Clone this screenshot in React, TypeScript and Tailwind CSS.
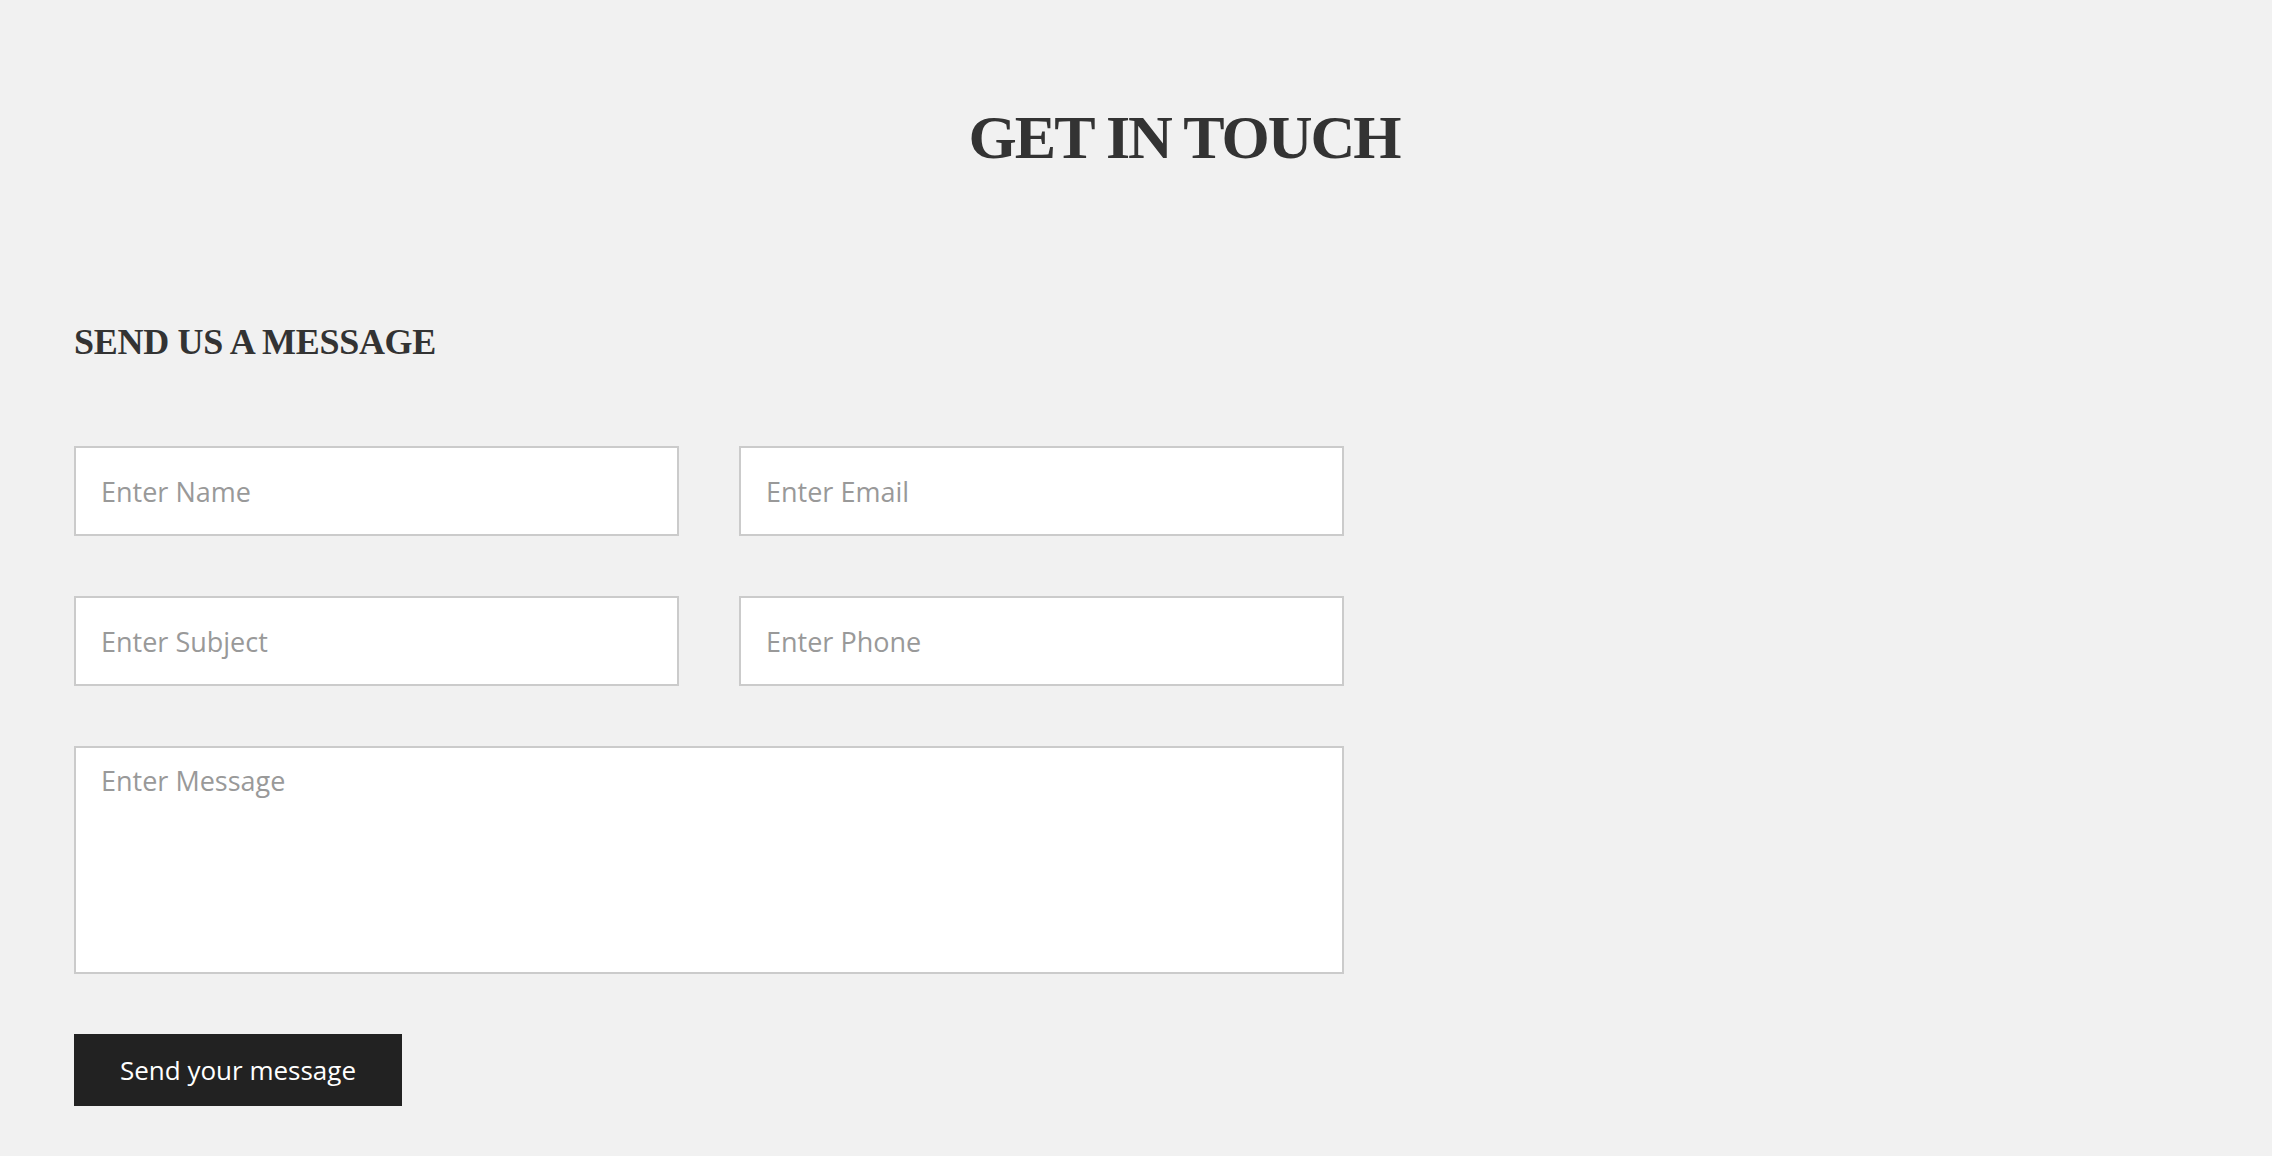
import React from "react";

const fieldClass =
  "w-full h-[90px] bg-white border-2 border-[#cbcbcb] px-[25px] font-['Open_Sans','Noto_Sans',sans-serif] text-[27px] text-[#333] placeholder:text-[#999] outline-none";

function Field({ placeholder }: { placeholder: string }) {
  return <input type="text" placeholder={placeholder} className={fieldClass} />;
}

export default function App() {
  return (
    <div className="min-h-[1156px] w-full bg-[#f1f1f1] text-[#333]">
      <h1 className="pt-[106px] pl-[96px] text-center font-['Liberation_Serif','Times_New_Roman',serif] text-[62px] leading-none font-bold tracking-[-2px] text-[#333]">
        GET IN TOUCH
      </h1>

      <div className="pl-[74px] pt-[156px] w-[1344px]">
        <h2 className="font-['Liberation_Serif','Times_New_Roman',serif] text-[36px] leading-none font-bold tracking-[-0.3px] text-[#333]">
          SEND US A MESSAGE
        </h2>

        <form className="mt-[86px] flex flex-col gap-[60px]" onSubmit={(e) => e.preventDefault()}>
          <div className="grid grid-cols-2 gap-[60px]">
            <Field placeholder="Enter Name" />
            <Field placeholder="Enter Email" />
            <Field placeholder="Enter Subject" />
            <Field placeholder="Enter Phone" />
          </div>

          <textarea
            placeholder="Enter Message"
            className="block w-full h-[228px] resize-none bg-white border-2 border-[#cbcbcb] px-[25px] pt-[13px] font-['Open_Sans','Noto_Sans',sans-serif] text-[27px] text-[#333] placeholder:text-[#999] outline-none"
          />

          <div>
            <button
              type="submit"
              className="w-[328px] h-[72px] bg-[#222] text-white font-['Open_Sans','Noto_Sans',sans-serif] text-[26px] flex items-center justify-center"
            >
              Send your message
            </button>
          </div>
        </form>
      </div>
    </div>
  );
}
